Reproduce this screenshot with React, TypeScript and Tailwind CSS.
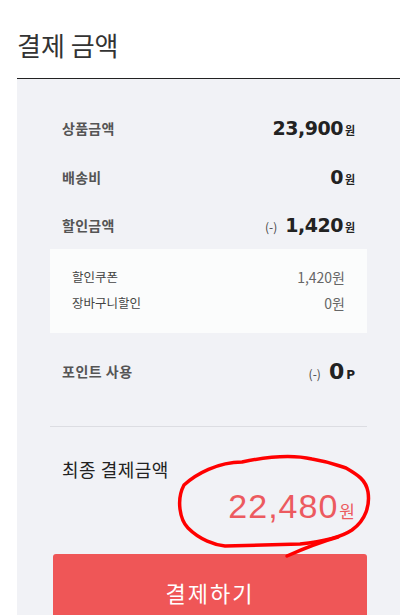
import React from 'react';

const kr = { fontFamily: '"Noto Sans CJK KR", "Noto Sans", sans-serif' };
const num = { fontFamily: '"DejaVu Sans", "Noto Sans CJK KR", sans-serif' };

function Row({ label, value, unit, minus }: { label: string; value: string; unit: string; minus?: boolean }) {
  return (
    <div className="flex items-center justify-between h-[24px]">
      <span className="text-[14px] font-bold text-[#555] tracking-[0.3px]" style={kr}>{label}</span>
      <span className="flex items-baseline">
        {minus && <span className="text-[12px] text-[#444] mr-[8px]" style={kr}>(-)</span>}
        <span className="text-[19px] font-bold text-[#222] tracking-[-0.5px]" style={num}>{value}</span>
        <span className="text-[11px] font-bold text-[#222] ml-[2px]" style={kr}>{unit}</span>
      </span>
    </div>
  );
}

export default function App() {
  return (
    <div className="w-[412px] h-[615px] overflow-hidden bg-white relative" style={kr}>
      <div className="px-[17px] pr-[12px]">
        <h1 className="pt-[25px] h-[78px] text-[26px] text-[#333] font-normal leading-[40px]">결제 금액</h1>
        <div className="border-t border-[#222] bg-[#f1f2f6] px-[33px] pt-[37px] h-[537px]">
          <div className="px-[12px]">
            <Row label="상품금액" value="23,900" unit="원" />
            <div className="h-[25px]" />
            <Row label="배송비" value="0" unit="원" />
            <div className="h-[24px]" />
            <Row label="할인금액" value="1,420" unit="원" minus />
          </div>
          <div className="mt-[12px] bg-[#fbfcfc] h-[84px] px-[22px] pt-[18px]">
            <div className="flex justify-between items-center h-[20px]">
              <span className="text-[12.5px] text-[#444]">할인쿠폰</span>
              <span className="text-[14px] text-[#666]">1,420원</span>
            </div>
            <div className="flex justify-between items-center h-[20px] mt-[6px]">
              <span className="text-[12.5px] text-[#444]">장바구니할인</span>
              <span className="text-[14px] text-[#666]">0원</span>
            </div>
          </div>
          <div className="px-[12px] mt-[26px]">
            <div className="flex items-center justify-between h-[24px]">
              <span className="text-[14px] font-bold text-[#555] tracking-[0.5px]">포인트 사용</span>
              <span className="flex items-baseline">
                <span className="text-[12px] text-[#444] mr-[8px]">(-)</span>
                <span className="text-[22px] font-bold text-[#222]" style={num}>0</span>
                <span className="text-[12px] font-bold text-[#222] ml-[2px]" style={num}>P</span>
              </span>
            </div>
          </div>
          <div className="mt-[43px] border-t border-[#dcdde2]" />
          <div className="px-[12px] pt-[29px]">
            <div className="text-[18px] text-[#222] leading-[26px] tracking-[0.5px]">최종 결제금액</div>
            <div className="flex justify-end items-baseline mt-[4px] h-[40px]">
              <span className="text-[34px] text-[#ec5a5f] tracking-[1px] leading-[40px]" style={{ fontFamily: '"Liberation Sans", sans-serif' }}>22,480</span>
              <span className="text-[17px] text-[#ec5a5f] ml-[1px]">원</span>
            </div>
          </div>
          <button className="mt-[28px] ml-[3px] w-[314px] h-[70px] bg-[#ef5657] rounded-[3px] text-white text-[22px] tracking-[2px] pt-[6px]">
            결제하기
          </button>
        </div>
      </div>
      <svg className="absolute left-0 top-0 pointer-events-none" width="412" height="615" viewBox="0 0 412 615">
        <path
          d="M242 462 C 218 462, 196 474, 184 485 C 176 500, 180 520, 188 528 C 200 540, 215 545, 225 546 L 300 544 C 320 542, 340 538, 352 530 C 366 520, 370 505, 368 492 C 366 480, 358 475, 346 468 C 336 465, 330 462, 312 459 C 295 455, 270 456, 242 462 Z"
          fill="none"
          stroke="#ff0000"
          strokeWidth="3.5"
          strokeLinejoin="round"
        />
        <path d="M338 537 C 320 542, 305 548, 287 556" fill="none" stroke="#ff0000" strokeWidth="3.5" strokeLinecap="round" />
      </svg>
    </div>
  );
}
